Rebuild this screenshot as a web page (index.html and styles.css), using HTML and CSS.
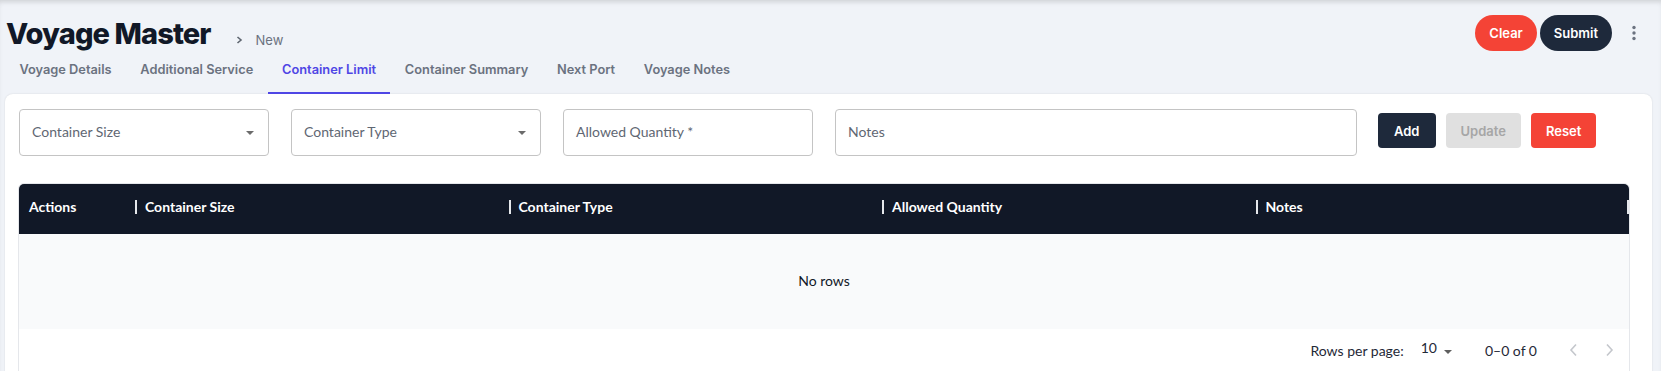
FILE: index.html
```html
<!DOCTYPE html>
<html lang="en">
<head>
<meta charset="utf-8">
<title>Voyage Master</title>
<link rel="stylesheet" href="styles.css">
</head>
<body>
<div class="page">
  <header class="topbar">
    <div class="title-wrap">
      <h1 class="title">Voyage Master</h1>
      <span class="crumb">
        <svg class="crumb-chev" width="7" height="8" viewBox="0 0 7 8"><path d="M1.5 1 L5 4 L1.5 7" fill="none" stroke="#5f6670" stroke-width="1.6"/></svg>
        <span>New</span>
      </span>
    </div>
    <div class="top-actions">
      <button class="pill pill-red">Clear</button>
      <button class="pill pill-dark">Submit</button>
      <span class="kebab">
        <svg width="6" height="16" viewBox="0 0 6 16"><circle cx="3" cy="2.5" r="1.7" fill="#6b7280"/><circle cx="3" cy="8" r="1.7" fill="#6b7280"/><circle cx="3" cy="13.5" r="1.7" fill="#6b7280"/></svg>
      </span>
    </div>
  </header>

  <nav class="tabs">
    <span class="tab">Voyage Details</span>
    <span class="tab">Additional Service</span>
    <span class="tab tab-active">Container Limit</span>
    <span class="tab">Container Summary</span>
    <span class="tab">Next Port</span>
    <span class="tab">Voyage Notes</span>
  </nav>

  <section class="card">
    <div class="form-row">
      <div class="field field-select"><span>Container Size</span><i class="caret"></i></div>
      <div class="field field-select"><span>Container Type</span><i class="caret"></i></div>
      <div class="field"><span>Allowed Quantity *</span></div>
      <div class="field field-notes"><span>Notes</span></div>
      <div class="form-btns">
        <button class="btn btn-dark">Add</button>
        <button class="btn btn-disabled">Update</button>
        <button class="btn btn-red">Reset</button>
      </div>
    </div>

    <div class="grid">
      <div class="grid-head">
        <div class="col">Actions</div>
        <div class="col col-sep">Container Size</div>
        <div class="col col-sep">Container Type</div>
        <div class="col col-sep">Allowed Quantity</div>
        <div class="col col-sep col-last">Notes</div>
      </div>
      <div class="grid-body">No rows</div>
      <div class="grid-foot">
        <span class="rpp">Rows per page:</span>
        <span class="rpp-val">10</span>
        <i class="caret caret-dark"></i>
        <span class="range">0–0 of 0</span>
        <svg class="pg pg-prev" width="9" height="14" viewBox="0 0 9 14"><path d="M7 1.5 L2 7 L7 12.5" fill="none" stroke="#c4c7cc" stroke-width="1.6"/></svg>
        <svg class="pg pg-next" width="9" height="14" viewBox="0 0 9 14"><path d="M2 1.5 L7 7 L2 12.5" fill="none" stroke="#c4c7cc" stroke-width="1.6"/></svg>
      </div>
    </div>
  </section>
</div>
</body>
</html>
```

FILE: styles.css
```css
* { box-sizing: border-box; }
html, body { margin: 0; padding: 0; }
body {
  background: #f0f3f8;
  font-family: Lato, "Noto Sans", sans-serif;
  color: #111827;
  overflow: hidden;
}
.page {
  min-height: 371px;
  box-shadow: inset 0 4px 5px -2px rgba(0, 0, 0, 0.14);
}

/* top bar */
.topbar {
  height: 46px;
  display: flex;
  justify-content: space-between;
  align-items: flex-start;
  padding: 0 15px 0 6px;
}
.title-wrap {
  display: flex;
  align-items: baseline;
  margin-top: 19px;
}
.title {
  margin: 0;
  font-family: Inter, sans-serif;
  font-weight: 800;
  font-size: 29px;
  line-height: 30px;
  letter-spacing: -0.9px;
  color: #111827;
}
.crumb {
  display: inline-flex;
  align-items: center;
  gap: 13px;
  margin-left: 25px;
  font-family: Inter, sans-serif;
  font-size: 13px;
  color: #6b7280;
}
.top-actions {
  display: flex;
  align-items: center;
  margin-top: 15px;
}
.pill {
  height: 36px;
  border: 0;
  border-radius: 18px;
  padding: 0 14px;
  font-family: Inter, sans-serif;
  font-weight: 600;
  font-size: 13px;
  color: #fff;
  margin-left: 3px;
}
.pill-red { background: #f44336; }
.pill-dark { background: #1e293b; }
.kebab {
  width: 24px;
  height: 36px;
  margin-left: 10px;
  display: flex;
  align-items: center;
  justify-content: center;
}

/* tabs */
.tabs {
  height: 48px;
  display: flex;
  padding-left: 5px;
}
.tab {
  display: flex;
  align-items: center;
  padding: 0 14.4px;
  font-family: Inter, sans-serif;
  font-weight: 600;
  font-size: 12.8px;
  color: #6b7280;
  border-bottom: 2px solid transparent;
}
.tab-active {
  color: #4f46e5;
  border-bottom-color: #4f46e5;
}

/* card */
.card {
  margin: 0 9px 0 5px;
  background: #fff;
  border-radius: 8px 8px 0 0;
  box-shadow: 0 0 2px rgba(0, 0, 0, 0.12);
  padding: 15px 22px 20px 13px;
  min-height: 300px;
}
.form-row {
  display: flex;
  align-items: center;
  padding-left: 1px;
}
.field {
  width: 250px;
  height: 47px;
  border: 1px solid #c4c4c4;
  border-radius: 4px;
  display: flex;
  align-items: center;
  justify-content: space-between;
  padding: 0 14px 3px 12px;
  font-size: 14px;
  color: #5f6773;
  margin-right: 22px;
}
.field-notes {
  width: 522px;
  margin-right: 21px;
}
.caret {
  display: inline-block;
  width: 0;
  height: 0;
  border-left: 4px solid transparent;
  border-right: 4px solid transparent;
  border-top: 4px solid #6b6b6b;
  margin-top: 4px;
}
.form-btns {
  display: flex;
  gap: 10px;
  margin-top: -4px;
}
.btn {
  height: 35px;
  border: 0;
  border-radius: 4px;
  font-family: Inter, sans-serif;
  font-weight: 600;
  font-size: 13px;
  padding: 0 16px;
  color: #fff;
}
.btn-dark { background: #1e293b; }
.btn-disabled { background: #e0e0e0; color: #a6a6a6; padding: 0 15px; }
.btn-red { background: #f44336; padding: 0 15px; }

/* data grid */
.grid {
  margin-top: 27px;
  border: 1px solid #e5e7eb;
  border-radius: 6px 6px 0 0;
  overflow: hidden;
}
.grid-head {
  height: 50px;
  background: #111827;
  display: grid;
  grid-template-columns: 116px repeat(4, 1fr);
  align-items: center;
  color: #fff;
  font-weight: 700;
  font-size: 14px;
}
.col {
  position: relative;
  padding: 0 0 5px 10px;
  height: 100%;
  display: flex;
  align-items: center;
}
.col-sep::before {
  content: "";
  position: absolute;
  left: 0;
  top: 16px;
  width: 2px;
  height: 14px;
  background: #e5e7eb;
}
.col-last::after {
  content: "";
  position: absolute;
  right: 0;
  top: 16px;
  width: 2px;
  height: 14px;
  background: #e5e7eb;
}
.grid-body {
  height: 95px;
  background: #f9fafb;
  display: flex;
  align-items: center;
  justify-content: center;
  padding-bottom: 3px;
  font-size: 14px;
  color: #111827;
}
.grid-foot {
  height: 42px;
  display: flex;
  align-items: center;
  justify-content: flex-end;
  padding-right: 15px;
  font-size: 14px;
  color: #1f2937;
}
.rpp-val { margin-left: 17px; margin-bottom: 6px; }
.caret-dark { margin-left: 7px; border-top-color: #5f5f5f; margin-top: 3px; }
.range { margin-left: 33px; }
.pg-prev { margin-left: 32px; }
.pg-next { margin-left: 27px; }
```
